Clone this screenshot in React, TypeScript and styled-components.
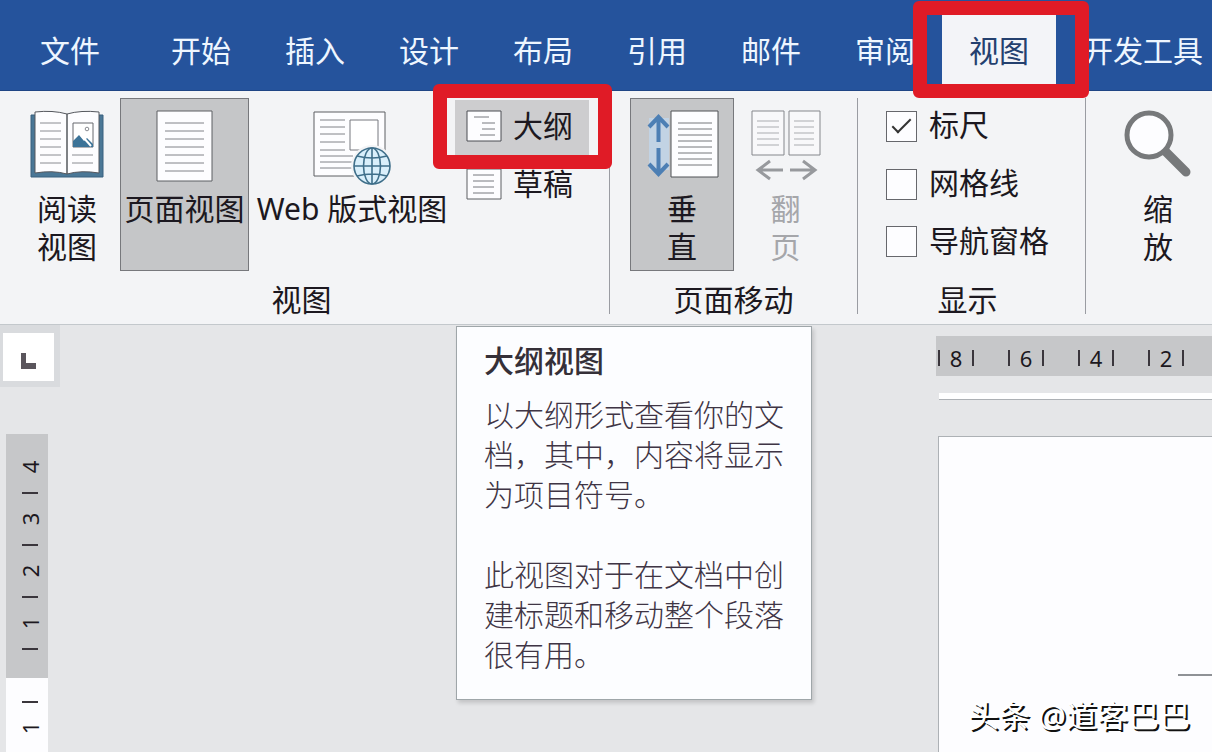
import React from "react";
import styled, { createGlobalStyle, css } from "styled-components";

const Global = createGlobalStyle`
  *, *::before, *::after { box-sizing: border-box; }
  body {
    margin: 0;
    background: #e5e6e8;
    color: #1c1820;
    font-family: "Noto Sans", "Noto Sans CJK SC", sans-serif;
    font-size: 30px;
    line-height: 38px;
  }
  button, input { font: inherit; color: inherit; }
  button { border: 0; margin: 0; padding: 0; background: none; white-space: nowrap; }
  svg { display: block; flex: none; }
`;

const Shell = styled.div`
  display: flex;
  flex-direction: column;
  min-height: 100vh;
  overflow: hidden;
`;

const TabBar = styled.nav`
  display: flex;
  align-items: flex-end;
  height: 91px;
  padding-top: 15px;
  background: #25539c;
  border-bottom: 1px solid #1f4585;
`;

const Tab = styled.button<{ $active?: boolean; $first?: boolean }>`
  position: relative;
  flex: none;
  align-self: stretch;
  padding: 0 27px 4px;
  color: #eef6ff;
  ${(p) => p.$first && css`padding: 0 44px 4px 40px;`}
  ${(p) => p.$active && css`background: #f3f4f8; color: #24406f; z-index: 2;`}
`;

const Highlight = styled.span<{ $area: "tab" | "row" }>`
  position: absolute;
  inset: ${(p) => (p.$area === "tab" ? "-14px -33px -8px -29px" : "-14px -23px -13px -22px")};
  border: 14px solid #e01b26;
  border-radius: 6px;
  pointer-events: none;
`;

const Ribbon = styled.div`
  display: flex;
  height: 234px;
  padding: 7px 0 0;
  background: #f3f4f6;
  border-bottom: 1px solid #c3c8cc;
`;

const Group = styled.section<{ $inset: number; $end?: number; $grow?: boolean }>`
  display: flex;
  flex-direction: column;
  flex: ${(p) => (p.$grow ? "1 0 auto" : "none")};
  height: 216px;
  padding: 0 ${(p) => p.$end ?? 20}px 0 ${(p) => p.$inset}px;
  border-right: ${(p) => (p.$grow ? "0" : "1px solid #9a9ca2")};
`;

const GroupItems = styled.div`
  display: flex;
  flex: none;
  height: 173px;
`;

const GroupName = styled.h2`
  margin: 10px 0 0;
  font-size: 30px;
  line-height: 38px;
  font-weight: 400;
  text-align: center;
`;

const BigButton = styled.button<{ $width: number; $active?: boolean }>`
  display: flex;
  flex-direction: column;
  align-items: center;
  width: ${(p) => p.$width}px;
  border: 1px solid ${(p) => (p.$active ? "#77787c" : "transparent")};
  background: ${(p) => (p.$active ? "#c5c6c8" : "none")};

  &:disabled { color: #a5a6aa; }
`;

const IconArea = styled.span`
  height: 91px;
  padding-top: 11px;
`;

const LabelLine = styled.span`
  display: block;
`;

const Stack = styled.div`
  display: flex;
  flex-direction: column;
`;

const RowButton = styled.button<{ $active?: boolean }>`
  position: relative;
  display: flex;
  align-items: center;
  gap: 11px;
  width: 134px;
  height: 58px;
  padding: 0 0 2px 11px;
  background: ${(p) => (p.$active ? "linear-gradient(#cdcdcf, #cdcdcf) 0 2px / 100% 56px no-repeat" : "none")};
  z-index: ${(p) => (p.$active ? 1 : 0)};
`;

const CheckRow = styled.label`
  display: flex;
  align-items: center;
  gap: 12px;
  height: 58px;
  padding-bottom: 3px;
`;

const CheckBox = styled.input`
  appearance: none;
  display: grid;
  place-items: center;
  width: 31px;
  height: 31px;
  margin: 2px 0 0;
  border: 1px solid #66676c;
  background: #fdfdff;

  &:checked::before {
    content: "";
    width: 19px;
    height: 9px;
    margin-bottom: 6px;
    border-left: 2px solid #333;
    border-bottom: 2px solid #333;
    transform: rotate(-45deg);
  }
`;

const Workspace = styled.main`
  position: relative;
  flex: 1;
  display: grid;
  grid-template-columns: 60px 1fr 276px;
  min-height: 427px;
`;

const LeftRail = styled.div`
  display: flex;
  flex-direction: column;
  align-items: flex-start;
`;

const TabStop = styled.button`
  display: grid;
  place-items: center;
  width: 60px;
  height: 62px;
  padding-top: 8px;
  margin-bottom: 47px;
  background: #fff;
  border: solid #d9dbde;
  border-width: 8px 6px 6px 3px;
`;

const VerticalRuler = styled.div<{ $page?: boolean }>`
  display: flex;
  flex-direction: column;
  width: 42px;
  margin-left: 6px;
  padding: ${(p) => (p.$page ? "11px 0 0 6px" : "20px 0 16px 6px")};
  background: ${(p) => (p.$page ? "#fdfdff" : "#c6c7c9")};
  flex: ${(p) => (p.$page ? "1" : "none")};
`;

const VerticalCell = styled.span`
  display: grid;
  place-items: center;
  height: 26px;
  font-size: 22px;
  line-height: 26px;
`;

const Turned = styled.span`
  transform: rotate(-90deg);
`;

const Tick = styled.i<{ $across?: boolean }>`
  width: ${(p) => (p.$across ? 16 : 2)}px;
  height: ${(p) => (p.$across ? 2 : 16)}px;
  background: #3a363c;
`;

const DocumentArea = styled.div`
  grid-column: 3;
  display: flex;
  flex-direction: column;
  padding-top: 11px;
`;

const HorizontalRuler = styled.div`
  display: flex;
  gap: 34px;
  height: 40px;
  padding: 0 0 0 2px;
  background: #c6c7c9;
  overflow: hidden;
`;

const RulerMark = styled.span`
  display: flex;
  flex: none;
  align-items: center;
  justify-content: space-between;
  width: 36px;
  padding-top: 3px;
  font-size: 22px;
  line-height: 26px;
`;

const PreviousPage = styled.div`
  height: 7px;
  margin: 17px 0 37px 3px;
  background: #fff;
  border-bottom: 1px solid #adb1b5;
`;

const Page = styled.article`
  flex: 1;
  display: flex;
  flex-direction: column;
  justify-content: flex-end;
  align-items: flex-end;
  margin: -1px 0 0 2px;
  background: #fdfdff;
  border: solid #adb1b5;
  border-width: 1px 0 0 1px;
`;

const PageRule = styled.hr`
  width: 34px;
  margin: 0 0 20px;
  border: 0;
  border-top: 2px solid #8f9296;
`;

const Credit = styled.p`
  margin: 0;
  padding: 0 22px 18px 0;
  font-size: 31px;
  color: #fff;
  text-shadow: 2px 2px 0 #111;
`;

const Tooltip = styled.aside`
  position: absolute;
  top: 1px;
  left: 456px;
  width: 356px;
  padding: 14px 27px 24px;
  background: #fcfdff;
  border: 1px solid #9fa6a9;
  box-shadow: 2px 3px 4px rgba(0, 0, 0, 0.15);
  line-height: 40px;
  color: #3f3545;
`;

const TooltipTitle = styled.h3`
  margin: 0 0 14px;
  font-size: 30px;
  font-weight: 500;
  color: #353038;
`;

const TooltipText = styled.p`
  margin: 0 0 40px;
  font-weight: 300;
  &:last-child { margin: 0; }
`;

const lines = (x1: number, x2: number, ys: number[]) => ys.map((y) => `M${x1} ${y}H${x2}`).join("");

const BookIcon = () => (
  <svg width="74" height="68" viewBox="0 0 74 68" fill="none">
    <path d="M1 5H6V61H33L37 64L41 61H68V5H73V67H1Z" fill="#4a7796" stroke="#38617e" />
    <path d="M5 2Q23 0 37 4Q51 0 69 2V63Q51 60 37 64Q23 60 5 63Z" fill="#fdfdff" stroke="#55585e" />
    <path d="M37 4V64" stroke="#55585e" strokeWidth="1.5" />
    <path d={lines(10, 31, [13, 21, 29, 37, 45, 53]) + lines(42, 63, [45, 53])} stroke="#8a8c92" />
    <path d="M43 13H63V37H43Z" fill="#fff" stroke="#66696f" />
    <path d="M43 37V31L49 25L54 31L57 28L63 34V37Z" fill="#3c7398" />
    <path d="M53 27L61 36" stroke="#fff" strokeWidth="2" />
    <circle cx="57" cy="19" r="1.8" stroke="#8a8c92" />
  </svg>
);

const PageIcon = () => (
  <svg width="57" height="72" viewBox="0 0 57 72" fill="none">
    <path d="M1 1H56V71H1Z" fill="#fdfdff" stroke="#5c5e63" />
    <path d={lines(9, 48, [13, 21, 29, 37, 45, 53, 61])} stroke="#808288" />
  </svg>
);

const WebIcon = () => (
  <svg width="78" height="76" viewBox="0 0 78 76" fill="none">
    <path d="M1 2H72V66H1Z" fill="#fdfdff" stroke="#5c5e63" />
    <path d={lines(7, 32, [10, 17, 24, 32, 40]) + lines(7, 40, [46, 52, 58])} stroke="#808288" />
    <path d="M37 10H65V40H37Z" fill="#fff" stroke="#77797e" />
    <circle cx="59" cy="56" r="21" fill="#f3f4f6" />
    <g stroke="#3f6f8a" strokeWidth="1.6">
      <circle cx="59" cy="56" r="18" fill="#d9effb" />
      <ellipse cx="59" cy="56" rx="8.5" ry="18" />
      <path d="M59 38V74M41 56H77M44 46Q59 50 74 46M44 66Q59 62 74 66" />
    </g>
  </svg>
);

const OutlineIcon = () => (
  <svg width="36" height="32" viewBox="0 0 36 32" fill="none">
    <path d="M1 1H35V31H1Z" fill="#fdfdff" stroke="#4b4c52" />
    <path d="M8 7H23M16 13H29M16 19H29M14 25H29" stroke="#77797e" />
  </svg>
);

const DraftIcon = () => (
  <svg width="36" height="32" viewBox="0 0 36 32" fill="none">
    <path d="M1 1H35V31H1Z" fill="#fdfdff" stroke="#5c5e63" />
    <path d={lines(7, 28, [7, 13, 19, 25])} stroke="#77797e" />
  </svg>
);

const VerticalIcon = () => (
  <svg width="74" height="68" viewBox="0 0 74 68" fill="none">
    <path d="M4 8H24V60H4Z" fill="#c2d3e4" />
    <path d="M13.500 6V32M4 17L13.500 7L23 17M13.500 38V64M4 54L13.500 64L23 54" stroke="#4d7fb4" strokeWidth="4" />
    <path d="M26 1H73V67H26Z" fill="#fdfdff" stroke="#4e5055" />
    <path d={lines(33, 67, [13, 19, 25, 31, 37, 43, 49, 55])} stroke="#74767b" />
  </svg>
);

const FlipIcon = () => (
  <svg width="70" height="72" viewBox="0 0 70 72" fill="none">
    <path d="M1 1H33V45H1ZM38 1H69V45H38Z" fill="#f8f8fa" stroke="#85878c" />
    <path d={lines(6, 28, [11, 17, 23, 29, 35]) + lines(43, 63, [11, 17, 23, 29, 35])} stroke="#aaacb0" />
    <path d="M32 60H7M19 51L7 60L19 69M39 60H63M52 51L64 60L52 69" stroke="#97999d" strokeWidth="3" />
  </svg>
);

const ZoomIcon = () => (
  <svg width="68" height="68" viewBox="0 0 68 68" fill="none">
    <path d="M41 41L62 62" stroke="#77797b" strokeWidth="9" strokeLinecap="round" />
    <circle cx="25" cy="25" r="22" fill="#fdfdff" stroke="#77797b" strokeWidth="5" />
  </svg>
);

const TabStopIcon = () => (
  <svg width="15" height="16" viewBox="0 0 15 16">
    <path d="M0 0H5V10H15V16H0Z" fill="#5a555c" />
  </svg>
);

interface BigProps {
  icon: React.ReactNode;
  label: string[];
  width: number;
  active?: boolean;
  disabled?: boolean;
}

const Big = ({ icon, label, width, active, disabled }: BigProps) => (
  <BigButton $width={width} $active={active} disabled={disabled}>
    <IconArea>{icon}</IconArea>
    {label.map((line) => (
      <LabelLine key={line}>{line}</LabelLine>
    ))}
  </BigButton>
);

const tabs = ["文件", "开始", "插入", "设计", "布局", "引用", "邮件", "审阅", "视图", "开发工具"];
const checks = [
  { label: "标尺", on: true },
  { label: "网格线", on: false },
  { label: "导航窗格", on: false },
];

const VerticalMark = ({ value }: { value?: number }) => (
  <VerticalCell>{value ? <Turned>{value}</Turned> : <Tick $across />}</VerticalCell>
);

export default function App() {
  return (
    <Shell>
      <Global />
      <TabBar>
        {tabs.map((name, i) => (
          <Tab key={name} $first={i === 0} $active={name === "视图"}>
            {name}
            {name === "视图" && <Highlight $area="tab" />}
          </Tab>
        ))}
      </TabBar>

      <Ribbon>
        <Group $inset={14}>
          <GroupItems>
            <Big icon={<BookIcon />} label={["阅读", "视图"]} width={106} />
            <Big icon={<PageIcon />} label={["页面视图"]} width={129} active />
            <Big icon={<WebIcon />} label={["Web 版式视图"]} width={206} />
            <Stack>
              <RowButton $active>
                <OutlineIcon />
                大纲
                <Highlight $area="row" />
              </RowButton>
              <RowButton>
                <DraftIcon />
                草稿
              </RowButton>
            </Stack>
          </GroupItems>
          <GroupName>视图</GroupName>
        </Group>

        <Group $inset={20}>
          <GroupItems>
            <Big icon={<VerticalIcon />} label={["垂", "直"]} width={104} active />
            <Big icon={<FlipIcon />} label={["翻", "页"]} width={103} disabled />
          </GroupItems>
          <GroupName>页面移动</GroupName>
        </Group>

        <Group $inset={28} $end={36}>
          <GroupItems>
            <Stack>
              {checks.map((c) => (
                <CheckRow key={c.label}>
                  <CheckBox type="checkbox" defaultChecked={c.on} />
                  {c.label}
                </CheckRow>
              ))}
            </Stack>
          </GroupItems>
          <GroupName>显示</GroupName>
        </Group>

        <Group $inset={30} $end={0} $grow>
          <GroupItems>
            <Big icon={<ZoomIcon />} label={["缩", "放"]} width={84} />
          </GroupItems>
        </Group>
      </Ribbon>

      <Workspace>
        <LeftRail>
          <TabStop aria-label="制表符">
            <TabStopIcon />
          </TabStop>
          <VerticalRuler>
            {[4, 3, 2, 1].map((n) => (
              <React.Fragment key={n}>
                <VerticalMark value={n} />
                <VerticalMark />
              </React.Fragment>
            ))}
          </VerticalRuler>
          <VerticalRuler $page>
            <VerticalMark />
            <VerticalMark value={1} />
          </VerticalRuler>
        </LeftRail>

        <DocumentArea>
          <HorizontalRuler>
            {[8, 6, 4, 2].map((n) => (
              <RulerMark key={n}>
                <Tick />
                {n}
                <Tick />
              </RulerMark>
            ))}
          </HorizontalRuler>
          <PreviousPage />
          <Page>
            <PageRule />
            <Credit>头条 @道客巴巴</Credit>
          </Page>
        </DocumentArea>

        <Tooltip role="tooltip">
          <TooltipTitle>大纲视图</TooltipTitle>
          <TooltipText>以大纲形式查看你的文档，其中，内容将显示为项目符号。</TooltipText>
          <TooltipText>此视图对于在文档中创建标题和移动整个段落很有用。</TooltipText>
        </Tooltip>
      </Workspace>
    </Shell>
  );
}
